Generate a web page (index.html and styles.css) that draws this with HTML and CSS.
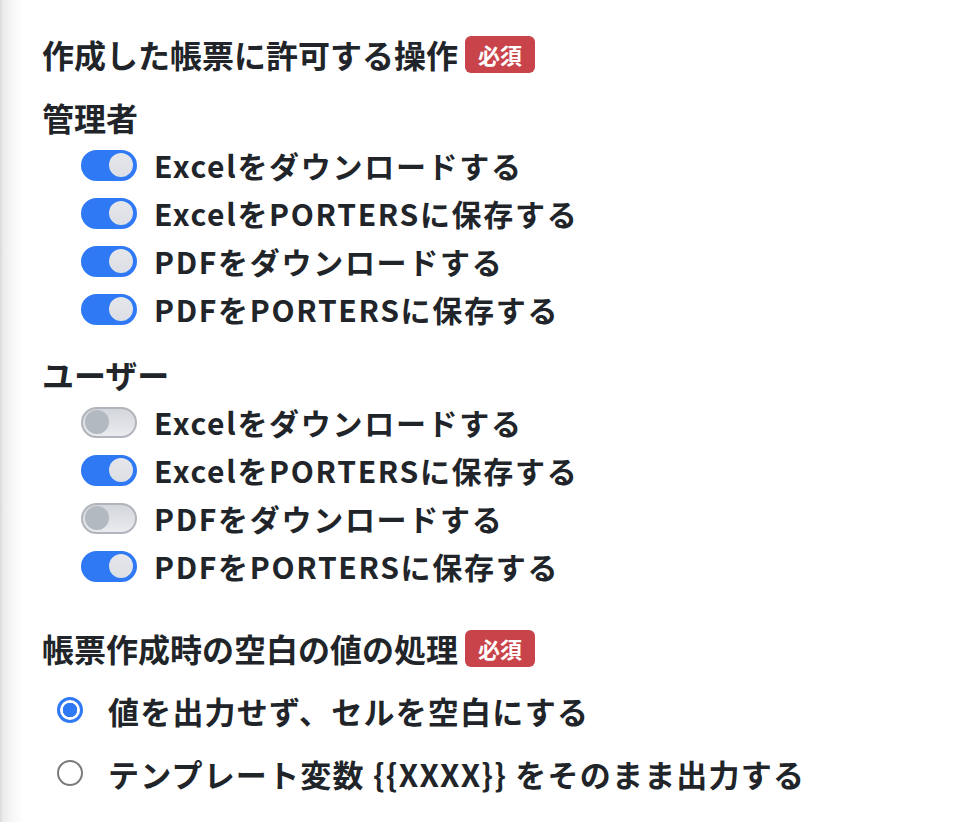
FILE: index.html
```html
<!DOCTYPE html>
<html lang="ja">
<head>
  <meta charset="UTF-8">
  <meta name="viewport" content="width=device-width, initial-scale=1.0">
  <title>帳票設定</title>
  <link rel="stylesheet" href="styles.css">
</head>
<body>
  <div class="panel">
    <div class="field">
      <div class="field-label">作成した帳票に許可する操作<span class="badge">必須</span></div>

      <div class="group">
        <div class="group-title">管理者</div>
        <ul class="switches">
          <li><span class="switch on"><span class="knob"></span></span>Excelをダウンロードする</li>
          <li><span class="switch on"><span class="knob"></span></span>ExcelをPORTERSに保存する</li>
          <li><span class="switch on"><span class="knob"></span></span>PDFをダウンロードする</li>
          <li><span class="switch on"><span class="knob"></span></span>PDFをPORTERSに保存する</li>
        </ul>
      </div>

      <div class="group">
        <div class="group-title">ユーザー</div>
        <ul class="switches">
          <li><span class="switch"><span class="knob"></span></span>Excelをダウンロードする</li>
          <li><span class="switch on"><span class="knob"></span></span>ExcelをPORTERSに保存する</li>
          <li><span class="switch"><span class="knob"></span></span>PDFをダウンロードする</li>
          <li><span class="switch on"><span class="knob"></span></span>PDFをPORTERSに保存する</li>
        </ul>
      </div>
    </div>

    <div class="field field-blank">
      <div class="field-label">帳票作成時の空白の値の処理<span class="badge">必須</span></div>
      <ul class="radios">
        <li><span class="radio checked"></span>値を出力せず、セルを空白にする</li>
        <li><span class="radio"></span>テンプレート変数 {{XXXX}} をそのまま出力する</li>
      </ul>
    </div>
  </div>
</body>
</html>
```

FILE: styles.css
```css
body {
  margin: 0;
  height: 822px;
  background: linear-gradient(to right, #d9d9d9 0, #ececec 3px, #f7f7f7 12px, #fff 24px);
  color: #212529;
  font-family: "Noto Sans CJK JP", sans-serif;
  font-weight: bold;
}

.panel {
  padding: 30px 0 0 42px;
}

.field-label {
  display: flex;
  align-items: center;
  height: 48px;
  font-size: 32px;
}

.badge {
  display: inline-block;
  margin-left: 7px;
  padding: 0 13px;
  height: 37px;
  line-height: 37px;
  font-size: 22px;
  color: #fff;
  background: #c9434a;
  border-radius: 6px;
}

.group {
  margin-top: 15px;
}

.group + .group {
  margin-top: 17px;
}

.group-title {
  height: 48px;
  line-height: 48px;
  font-size: 32px;
}

ul {
  list-style: none;
  margin: 0;
  padding: 0;
}

.switches li {
  display: flex;
  align-items: center;
  height: 48px;
  padding-left: 39px;
  font-size: 30px;
  letter-spacing: 1.7px;
}

.switch {
  display: flex;
  align-items: center;
  box-sizing: border-box;
  width: 56px;
  height: 31px;
  margin-right: 17px;
  padding: 0 2px;
  border: 2px solid #b1b5bb;
  border-radius: 16px;
  background: linear-gradient(to bottom, #d3d6da, #e9ebee);
}

.knob {
  width: 24px;
  height: 24px;
  border-radius: 50%;
  background: #b3b9c1;
}

.switch.on {
  justify-content: flex-end;
  border-color: #3079f5;
  background: #3079f5;
}

.switch.on .knob {
  background: linear-gradient(to bottom, #e4e6ea, #dcdfe4);
}

.field-blank {
  margin-top: 34px;
}

.radios {
  margin-top: 14px;
}

.radios li {
  display: flex;
  align-items: center;
  height: 48px;
  padding-left: 15px;
  font-size: 31px;
  letter-spacing: 1.2px;
}

.radios li + li {
  margin-top: 15px;
}

.radio {
  box-sizing: border-box;
  width: 26px;
  height: 26px;
  margin-right: 25px;
  border: 2px solid #7b7b7b;
  border-radius: 50%;
  background: #fff;
}

.radio.checked {
  border: 3px solid #3079f5;
  background: radial-gradient(circle, #3079f5 0, #3079f5 7px, #fff 7.5px);
}
```
